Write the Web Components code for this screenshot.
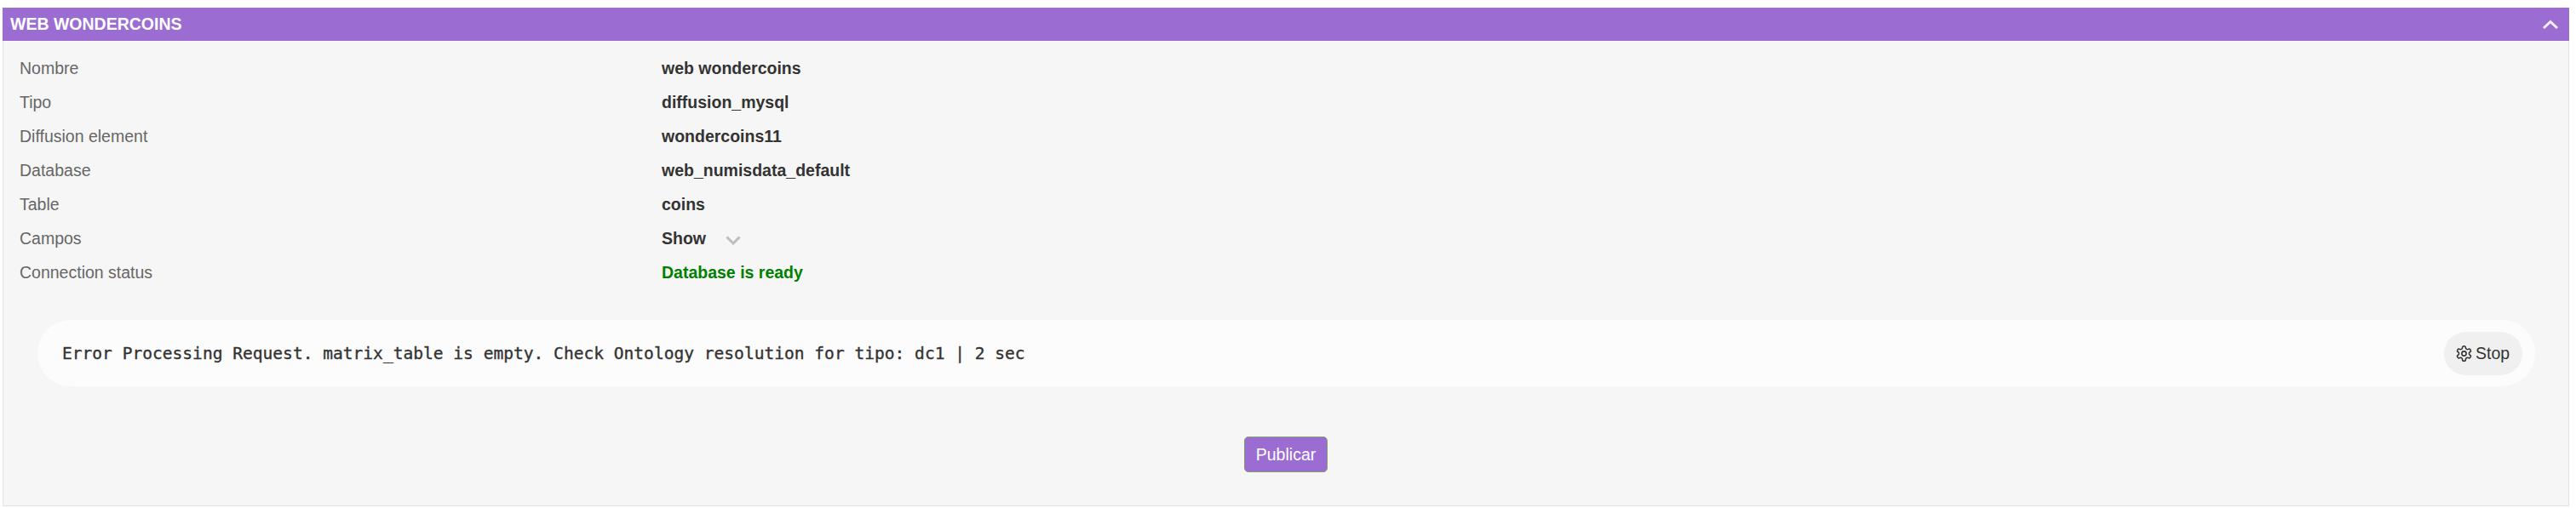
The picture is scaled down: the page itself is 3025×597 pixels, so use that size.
<!DOCTYPE html>
<html>
<head>
<meta charset="utf-8">
<style>
    html, body { margin: 0; padding: 0; background: #fff; }
    body { font-family: "Liberation Sans", Arial, sans-serif; font-size: 19.5px; color: #333; }
</style>
</head>
<body>
<diffusion-panel title-text="WEB WONDERCOINS">
    <info-row label="Nombre">web wondercoins</info-row>
    <info-row label="Tipo">diffusion_mysql</info-row>
    <info-row label="Diffusion element">wondercoins11</info-row>
    <info-row label="Database">web_numisdata_default</info-row>
    <info-row label="Table">coins</info-row>
    <info-row label="Campos"><show-toggle></show-toggle></info-row>
    <info-row label="Connection status" status="ok">Database is ready</info-row>
    <process-status>Error Processing Request. matrix_table is empty. Check Ontology resolution for tipo: dc1 | 2 sec</process-status>
    <publish-button>Publicar</publish-button>
</diffusion-panel>

<script>
class DiffusionPanel extends HTMLElement {
    connectedCallback() {
        this.attachShadow({mode: 'open'});
        this.shadowRoot.innerHTML = `<style>
            :host { display: block; margin: 9px 8px 0 3px; }
            header {
                height: 39px;
                background: #9b6dd3;
                color: #fff;
                font-weight: bold;
                display: flex;
                align-items: center;
                justify-content: space-between;
                padding: 0 12px 0 9px;
                box-sizing: border-box;
            }
            .title { font-size: 19.5px; }
            svg { display: block; }
            .body {
                height: 547px;
                box-sizing: border-box;
                background: #f6f6f6;
                border: 1px solid #e2e2e2;
                border-top: 0;
                padding: 12px 0 0 0;
            }
        </style>
        <header>
            <span class="title">${this.getAttribute('title-text')}</span>
            <svg width="20" height="14" viewBox="0 0 20 14"><path d="M2 11 L10 3.500 L18 11" fill="none" stroke="#f3eefa" stroke-width="3"/></svg>
        </header>
        <div class="body"><slot></slot></div>`;
    }
}

class InfoRow extends HTMLElement {
    connectedCallback() {
        this.attachShadow({mode: 'open'});
        this.shadowRoot.innerHTML = `<style>
            :host { display: flex; align-items: center; height: 40px; padding-left: 19px; }
            .label { width: 754px; color: #666; }
            .value { font-weight: bold; color: #333; }
            :host([status="ok"]) .value { color: #008000; }
        </style>
        <span class="label">${this.getAttribute('label')}</span>
        <span class="value"><slot></slot></span>`;
    }
}

class ShowToggle extends HTMLElement {
    connectedCallback() {
        this.attachShadow({mode: 'open'});
        this.shadowRoot.innerHTML = `<style>
            :host { display: inline-flex; align-items: center; gap: 23px; }
            svg { display: block; margin-top: 4px; }
        </style>
        <span>Show</span>
        <svg width="18" height="11" viewBox="0 0 18 11"><path d="M1.500 1.500 L9 9 L16.500 1.500" fill="none" stroke="#bdbdbd" stroke-width="3"/></svg>`;
    }
}

class ProcessStatus extends HTMLElement {
    connectedCallback() {
        this.attachShadow({mode: 'open'});
        this.shadowRoot.innerHTML = `<style>
            :host {
                display: flex;
                align-items: center;
                justify-content: space-between;
                height: 78px;
                box-sizing: border-box;
                margin: 36px 39px 0 40px;
                padding: 0 15px 0 29px;
                background: #fcfcfc;
                border-radius: 39px;
            }
            .msg {
                font-family: "DejaVu Sans Mono", monospace;
                font-size: 19.57px;
                color: #333;
                -webkit-text-stroke: 0.35px #333;
            }
            button {
                display: flex;
                align-items: center;
                gap: 3px;
                height: 51px;
                width: 92px;
                padding: 0 0 0 13px;
                box-sizing: border-box;
                border: 0;
                border-radius: 26px;
                background: #f0f0f0;
                color: #333;
                font: 19.5px "Liberation Sans", Arial, sans-serif;
            }
            svg { display: block; flex: none; }
        </style>
        <span class="msg"><slot></slot></span>
        <button>
            <svg width="21" height="21" viewBox="0 0 24 24" fill="none" stroke="#333" stroke-width="1.800" stroke-linecap="round" stroke-linejoin="round">
                <circle cx="12" cy="12" r="3"/>
                <path d="M12.2 2h-.4a2 2 0 0 0-2 2v.2a2 2 0 0 1-1 1.700l-.4.3a2 2 0 0 1-2 0l-.2-.1a2 2 0 0 0-2.700.7l-.2.4a2 2 0 0 0 .7 2.700l.2.1a2 2 0 0 1 1 1.700v.5a2 2 0 0 1-1 1.700l-.2.1a2 2 0 0 0-.7 2.700l.2.4a2 2 0 0 0 2.700.7l.2-.1a2 2 0 0 1 2 0l.4.3a2 2 0 0 1 1 1.700v.2a2 2 0 0 0 2 2h.4a2 2 0 0 0 2-2v-.2a2 2 0 0 1 1-1.700l.4-.3a2 2 0 0 1 2 0l.2.1a2 2 0 0 0 2.700-.7l.2-.4a2 2 0 0 0-.7-2.700l-.2-.1a2 2 0 0 1-1-1.700v-.5a2 2 0 0 1 1-1.700l.2-.1a2 2 0 0 0 .7-2.700l-.2-.4a2 2 0 0 0-2.700-.7l-.2.1a2 2 0 0 1-2 0l-.4-.3a2 2 0 0 1-1-1.700V4a2 2 0 0 0-2-2z"/>
            </svg>
            <span>Stop</span>
        </button>`;
    }
}

class PublishButton extends HTMLElement {
    connectedCallback() {
        this.attachShadow({mode: 'open'});
        this.shadowRoot.innerHTML = `<style>
            :host { display: flex; justify-content: center; margin-top: 59px; }
            button {
                width: 98px;
                height: 42px;
                padding: 0;
                box-sizing: border-box;
                border: 1px solid #7f9f6b;
                border-radius: 5px;
                background: #9b6dd3;
                color: #fff;
                font: 19.5px "Liberation Sans", Arial, sans-serif;
            }
        </style>
        <button><slot></slot></button>`;
    }
}

customElements.define('diffusion-panel', DiffusionPanel);
customElements.define('info-row', InfoRow);
customElements.define('show-toggle', ShowToggle);
customElements.define('process-status', ProcessStatus);
customElements.define('publish-button', PublishButton);
</script>
</body>
</html>
